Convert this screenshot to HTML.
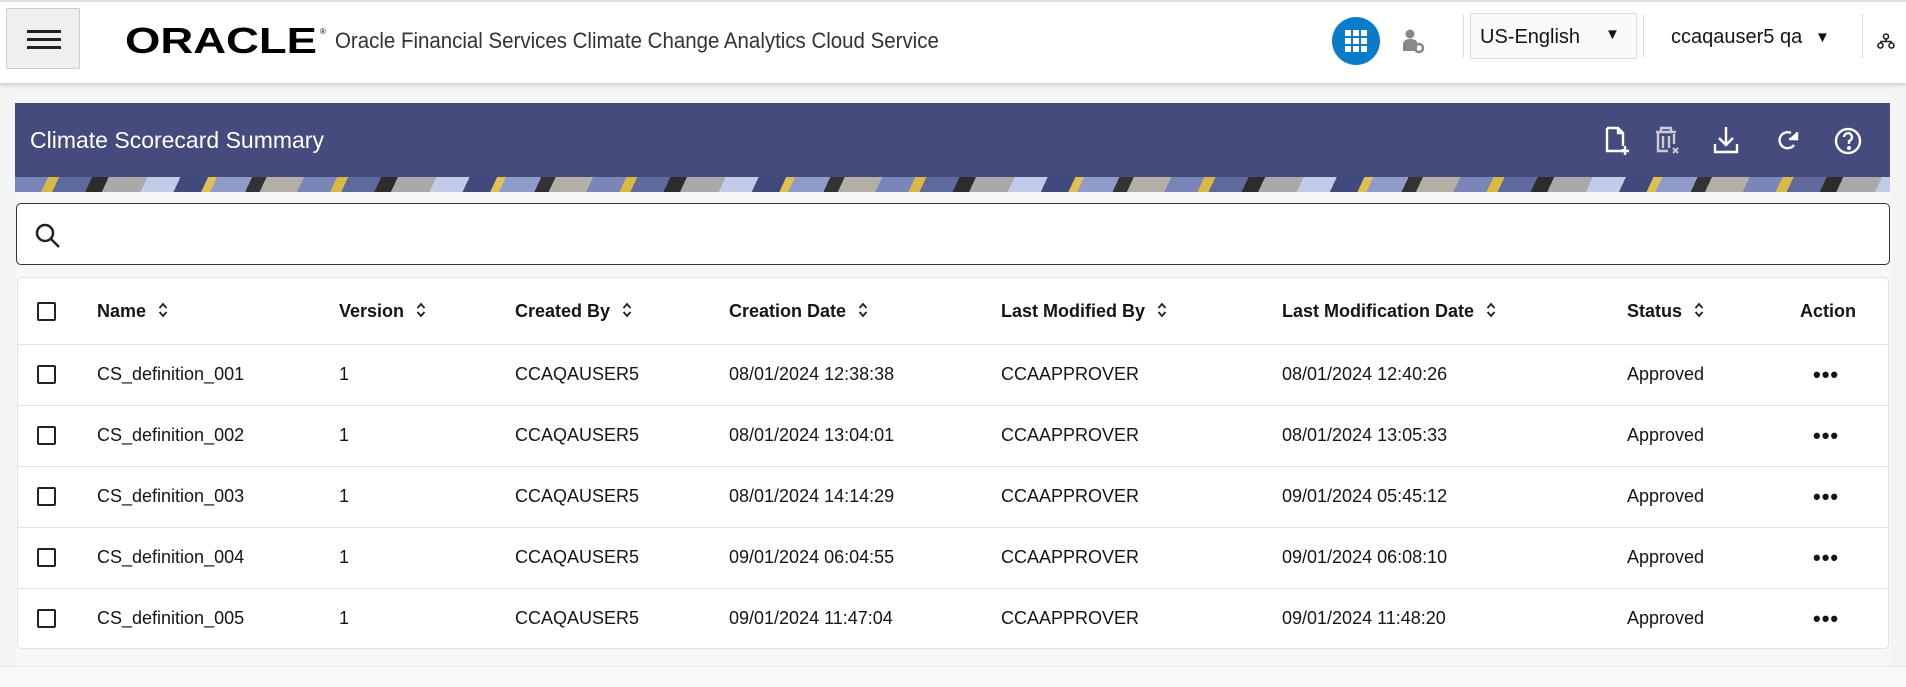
<!DOCTYPE html>
<html><head><meta charset="utf-8"><style>
*{box-sizing:border-box;margin:0;padding:0}
body{width:1906px;height:687px;overflow:hidden;background:#f4f4f4;font-family:"Liberation Sans",sans-serif;color:#161513;position:relative}
.hdr{position:absolute;left:0;top:0;width:1906px;height:83px;background:#fff;border-top:2px solid #ddd;box-shadow:0 2px 4px rgba(0,0,0,.18)}
.abs{position:absolute}
.ham{left:6px;top:6px;width:74px;height:61px;background:#efefef;border:1px solid #ccc;border-radius:2px}
.ham i{position:absolute;left:20px;width:34px;height:3px;background:#222}
.title{left:335px;top:26px;font-size:22px;color:#333;white-space:nowrap;transform:scaleX(.93);transform-origin:left}
.lang{left:1470px;top:11px;width:167px;height:46px;border:1px solid #ddd;background:#fafafa;border-radius:2px;font-size:20px;padding:12px 0 0 9px}
.div{width:1px;height:44px;background:#ddd;top:12px}
.panel{left:15px;top:94px;width:1876px;height:572px;background:#f7f7f7}
.tb{left:15px;top:103px;width:1875px;height:74px;background:#464b7e;color:#fff;font-size:23px;padding:24px 0 0 15px}
.stripe{left:15px;top:177px;width:1875px;height:15px;background:repeating-linear-gradient(115deg,#7a86b8 0 30px,#d9b846 30px 40px,#5e6a9e 40px 70px,#2c2c2c 70px 85px,#a9a9a9 85px 120px,#c2cbe8 120px 150px,#414a7c 150px 175px,#e0c050 175px 183px,#8f9bc9 183px 215px,#333 215px 228px,#b3aea6 228px 262px)}
.search{left:16px;top:203px;width:1874px;height:62px;background:#fff;border:1px solid #333;border-radius:5px}
.card{left:17px;top:277px;width:1872px;height:372px;background:#fff;border:1px solid #e3e3e3;border-radius:5px}
.row{position:absolute;left:0;width:1870px;border-bottom:1px solid #e2e2e2;font-size:18px}
.row span{position:absolute;white-space:nowrap}
.cb{width:19px;height:19px;border:2px solid #222;border-radius:2px}
.h span{font-weight:bold}
.sort{display:inline-block;margin-left:12px;vertical-align:-1px}
.dots{font-weight:bold;letter-spacing:1px;font-size:22px}
</style></head><body>
<div class="hdr">
 <div class="abs ham"><i style="top:21px"></i><i style="top:29px"></i><i style="top:37px"></i></div>
 <svg class="abs" style="left:125px;top:23px" width="202" height="30" viewBox="0 0 202 30">
  <text x="0" y="28" font-family="Liberation Sans" font-weight="bold" font-size="36" fill="#000" textLength="192" lengthAdjust="spacingAndGlyphs">ORACLE</text>
  <text x="195" y="9" font-size="8" fill="#000">®</text></svg>
 <div class="abs title">Oracle Financial Services Climate Change Analytics Cloud Service</div>
 <div class="abs" style="left:1332px;top:15px;width:48px;height:48px;border-radius:50%;background:#0a7bc8"></div>
 <svg class="abs" style="left:1345px;top:28px" width="22" height="22"><g fill="#fff"><rect x="0" y="0" width="6" height="6"/><rect x="8" y="0" width="6" height="6"/><rect x="16" y="0" width="6" height="6"/><rect x="0" y="8" width="6" height="6"/><rect x="8" y="8" width="6" height="6"/><rect x="16" y="8" width="6" height="6"/><rect x="0" y="16" width="6" height="6"/><rect x="8" y="16" width="6" height="6"/><rect x="16" y="16" width="6" height="6"/></g></svg>
 <svg class="abs" style="left:1402px;top:27px" width="24" height="26" viewBox="0 0 24 26"><circle cx="8" cy="5" r="4.5" fill="#888"/><path d="M1 22v-7c0-3 3-5 7-5s6 1 7 3v9z" fill="#888"/><circle cx="17" cy="19" r="4" fill="none" stroke="#888" stroke-width="2.5"/></svg>
 <div class="abs div" style="left:1463px"></div>
 <div class="abs lang">US-English<span style="position:absolute;left:134px;top:12px;font-size:15px">▼</span></div>
 <div class="abs div" style="left:1643px"></div>
 <div class="abs" style="left:1671px;top:24px;font-size:20px">ccaqauser5 qa</div>
 <div class="abs" style="left:1815px;top:27px;font-size:15px">▼</div>
 <div class="abs div" style="left:1862px"></div>
 <svg class="abs" style="left:1877px;top:31px" width="18" height="16" viewBox="0 0 18 16" fill="none" stroke="#222" stroke-width="1.6"><circle cx="9" cy="3.5" r="2.5"/><circle cx="3.5" cy="12.5" r="2.5"/><circle cx="14.5" cy="12.5" r="2.5"/><path d="M9 6v3M4 10V8.5h10V10"/></svg>
</div>
<div class="abs panel"></div>
<div class="abs tb">Climate Scorecard Summary</div>
<svg class="abs" style="left:1590px;top:122px" width="280" height="36" viewBox="0 0 280 36" fill="none" stroke="#fff" stroke-width="2.4">
 <path d="M17 6h11l5 5v13M33 27v2H17V6"/><path d="M28 6v5h5"/><path d="M35 24v9M31 29h8"/>
 <path d="M66 10h20M71 10V6h10v4M68 10v19h10M73 14v12M79 14v12M84 12v10" stroke="#ccc"/><path d="M83 26l5 5M88 26l-5 5" stroke="#ccc" stroke-width="2"/>
 <path d="M136 5v18M129 16l7 7 7-7M125 22v8h22v-8"/>
 <path d="M201 11a8 8 0 1 0 3 12" /><path d="M199 17h8v-7" fill="#fff"/>
 <circle cx="258" cy="19" r="12"/><path d="M254 15a4 4 0 1 1 5 4v3"/><circle cx="259" cy="26" r=".8" fill="#fff"/>
</svg>
<div class="abs stripe"></div>
<div class="abs search"><svg style="position:absolute;left:18px;top:19px" width="26" height="26" fill="none" stroke="#222" stroke-width="2.5"><circle cx="10" cy="10" r="8"/><path d="M16 16l8 8"/></svg></div>
<div class="abs card">
 <div class="row h" style="top:0;height:67px">
  <span class="cb" style="left:19px;top:24px"></span>
  <span style="left:79px;top:23px">Name<svg class="sort" width="10" height="16" fill="none" stroke="#222" stroke-width="1.8"><path d="M1.5 6l3.5-4 3.5 4M1.5 10l3.5 4 3.5-4"/></svg></span>
  <span style="left:321px;top:23px">Version<svg class="sort" width="10" height="16" fill="none" stroke="#222" stroke-width="1.8"><path d="M1.5 6l3.5-4 3.5 4M1.5 10l3.5 4 3.5-4"/></svg></span>
  <span style="left:497px;top:23px">Created By<svg class="sort" width="10" height="16" fill="none" stroke="#222" stroke-width="1.8"><path d="M1.5 6l3.5-4 3.5 4M1.5 10l3.5 4 3.5-4"/></svg></span>
  <span style="left:711px;top:23px">Creation Date<svg class="sort" width="10" height="16" fill="none" stroke="#222" stroke-width="1.8"><path d="M1.5 6l3.5-4 3.5 4M1.5 10l3.5 4 3.5-4"/></svg></span>
  <span style="left:983px;top:23px">Last Modified By<svg class="sort" width="10" height="16" fill="none" stroke="#222" stroke-width="1.8"><path d="M1.5 6l3.5-4 3.5 4M1.5 10l3.5 4 3.5-4"/></svg></span>
  <span style="left:1264px;top:23px">Last Modification Date<svg class="sort" width="10" height="16" fill="none" stroke="#222" stroke-width="1.8"><path d="M1.5 6l3.5-4 3.5 4M1.5 10l3.5 4 3.5-4"/></svg></span>
  <span style="left:1609px;top:23px">Status<svg class="sort" width="10" height="16" fill="none" stroke="#222" stroke-width="1.8"><path d="M1.5 6l3.5-4 3.5 4M1.5 10l3.5 4 3.5-4"/></svg></span>
  <span style="left:1782px;top:23px">Action</span>
 </div>
 <div class="row" style="top:67px;height:61px"><span class="cb" style="left:19px;top:20px"></span><span style="left:79px;top:19px">CS_definition_001</span><span style="left:321px;top:19px">1</span><span style="left:497px;top:19px">CCAQAUSER5</span><span style="left:711px;top:19px">08/01/2024 12:38:38</span><span style="left:983px;top:19px">CCAAPPROVER</span><span style="left:1264px;top:19px">08/01/2024 12:40:26</span><span style="left:1609px;top:19px">Approved</span><span class="dots" style="left:1795px;top:17px">•••</span></div>
 <div class="row" style="top:128px;height:61px"><span class="cb" style="left:19px;top:20px"></span><span style="left:79px;top:19px">CS_definition_002</span><span style="left:321px;top:19px">1</span><span style="left:497px;top:19px">CCAQAUSER5</span><span style="left:711px;top:19px">08/01/2024 13:04:01</span><span style="left:983px;top:19px">CCAAPPROVER</span><span style="left:1264px;top:19px">08/01/2024 13:05:33</span><span style="left:1609px;top:19px">Approved</span><span class="dots" style="left:1795px;top:17px">•••</span></div>
 <div class="row" style="top:189px;height:61px"><span class="cb" style="left:19px;top:20px"></span><span style="left:79px;top:19px">CS_definition_003</span><span style="left:321px;top:19px">1</span><span style="left:497px;top:19px">CCAQAUSER5</span><span style="left:711px;top:19px">08/01/2024 14:14:29</span><span style="left:983px;top:19px">CCAAPPROVER</span><span style="left:1264px;top:19px">09/01/2024 05:45:12</span><span style="left:1609px;top:19px">Approved</span><span class="dots" style="left:1795px;top:17px">•••</span></div>
 <div class="row" style="top:250px;height:61px"><span class="cb" style="left:19px;top:20px"></span><span style="left:79px;top:19px">CS_definition_004</span><span style="left:321px;top:19px">1</span><span style="left:497px;top:19px">CCAQAUSER5</span><span style="left:711px;top:19px">09/01/2024 06:04:55</span><span style="left:983px;top:19px">CCAAPPROVER</span><span style="left:1264px;top:19px">09/01/2024 06:08:10</span><span style="left:1609px;top:19px">Approved</span><span class="dots" style="left:1795px;top:17px">•••</span></div>
 <div class="row" style="top:311px;height:60px;border-bottom:none"><span class="cb" style="left:19px;top:20px"></span><span style="left:79px;top:19px">CS_definition_005</span><span style="left:321px;top:19px">1</span><span style="left:497px;top:19px">CCAQAUSER5</span><span style="left:711px;top:19px">09/01/2024 11:47:04</span><span style="left:983px;top:19px">CCAAPPROVER</span><span style="left:1264px;top:19px">09/01/2024 11:48:20</span><span style="left:1609px;top:19px">Approved</span><span class="dots" style="left:1795px;top:17px">•••</span></div>
</div>
<div class="abs" style="left:0;top:666px;width:1906px;height:21px;background:#f8f8f8;border-top:1px solid #e6e6e6"></div>
</body></html>
